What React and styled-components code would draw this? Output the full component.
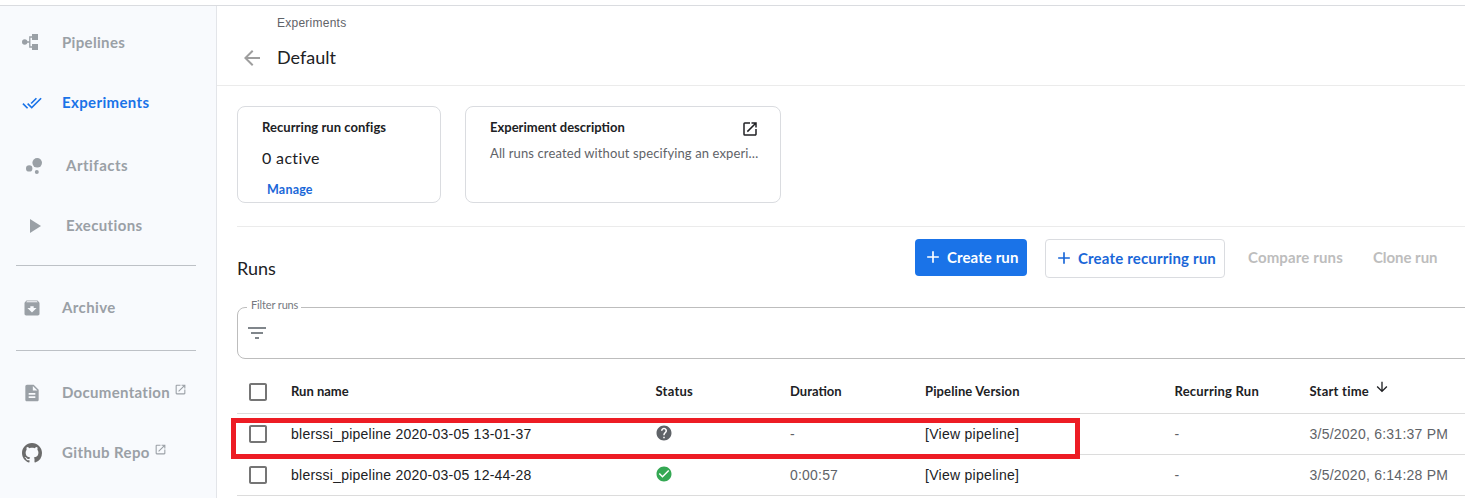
import React from 'react';
import styled, { createGlobalStyle } from 'styled-components';
import {
  MdDoneAll, MdBubbleChart, MdPlayArrow, MdArchive, MdDescription, MdLaunch, MdArrowBack,
  MdFilterList, MdHelp, MdCheckCircle, MdAdd, MdCheckBoxOutlineBlank, MdArrowDownward,
} from 'react-icons/md';

const Global = createGlobalStyle`
  * { box-sizing: border-box; }
  body {
    margin: 0;
    overflow: hidden;
    background: #fff;
    color: #202124;
    font-family: Lato, sans-serif;
  }
`;

const Page = styled.div`
  display: flex;
  flex-direction: column;
  width: 1465px;
  height: 498px;
  padding-top: 5px;
  overflow: hidden;
`;

const Body = styled.div`
  display: flex;
  flex: 1;
  border-top: 1px solid #dadce0;
`;

const Sidebar = styled.nav`
  display: flex;
  flex-direction: column;
  width: 217px;
  flex: none;
  padding-top: 7px;
  background: #f8fafd;
  border-right: 1px solid #e3e5e9;
`;

const NavItem = styled.a`
  display: flex;
  align-items: center;
  height: 60px;
  flex: none;
  margin-top: ${p => p.$gap || 0}px;
  padding-left: 22px;
  color: ${p => (p.$active ? '#1a73e8' : '#9aa0a6')};
  svg { flex: none; }
`;

const NavLabel = styled.span`
  margin: 0 0 2px 20px;
  font-size: 15px;
  font-weight: 700;
  line-height: 20px;
  letter-spacing: ${p => p.$track}px;
`;

const External = styled.span`
  display: flex;
  margin: -7px 0 0 4px;
`;

const NavRule = styled.div`
  height: 1px;
  flex: none;
  margin: ${p => p.$top}px 20px ${p => p.$bottom}px 16px;
  background: #bdc1c6;
`;

const Main = styled.main`
  display: flex;
  flex-direction: column;
  flex: 1;
  min-width: 0;
`;

const Header = styled.header`
  height: 80px;
  flex: none;
  padding: 9px 0 0 23px;
  border-bottom: 1px solid #ebebeb;
`;

const Crumb = styled.div`
  padding-left: 37px;
  color: #5f6368;
  font: 12px/16px "Liberation Sans", sans-serif;
  letter-spacing: 0.25px;
`;

const TitleRow = styled.div`
  display: flex;
  align-items: center;
  height: 24px;
  margin-top: 15px;
  color: #9e9e9e;
`;

const Title = styled.h1`
  margin: 0 0 2px 13px;
  color: #202124;
  font-size: 18px;
  font-weight: 400;
  line-height: 24px;
`;

const Content = styled.div`
  display: flex;
  flex-direction: column;
  padding: 20px 0 0 20px;
`;

const Cards = styled.div`
  display: flex;
  gap: 24px;
  height: 121px;
  border-bottom: 1px solid #ebebeb;
`;

const Card = styled.section`
  width: ${p => p.$width}px;
  height: 97px;
  padding: 12px 21px 0 24px;
  border: 1px solid #dadce0;
  border-radius: 8px;
`;

const CardHead = styled.div`
  display: flex;
  justify-content: space-between;
  height: 18px;
`;

const CardTitle = styled.h2`
  margin: 0;
  font-size: 13px;
  font-weight: 700;
  line-height: 16px;
  letter-spacing: ${p => p.$track}px;
`;

const LaunchButton = styled.span`
  display: flex;
  margin-top: 1px;
`;

const ActiveCount = styled.div`
  margin-top: 13px;
  font-size: 16px;
  line-height: 20px;
  letter-spacing: 0.35px;
`;

const ManageLink = styled.a`
  display: block;
  margin: 14px 0 0 5px;
  color: #1a67d8;
  font-size: 12.5px;
  font-weight: 700;
  line-height: 16px;
  letter-spacing: 0.2px;
`;

const Description = styled.p`
  width: 272px;
  margin: 7px 0 0;
  color: #5f6368;
  font-size: 13px;
  line-height: 18px;
  letter-spacing: 0.12px;
  white-space: nowrap;
`;

const Toolbar = styled.div`
  display: flex;
  align-items: flex-start;
  height: 80px;
  padding-top: 12px;
`;

const RunsTitle = styled.h2`
  width: 678px;
  margin: 17px 0 0;
  font-size: 18px;
  font-weight: 400;
  line-height: 24px;
`;

const Button = styled.button`
  display: flex;
  align-items: center;
  gap: 4px;
  width: ${p => p.$width}px;
  height: ${p => (p.$primary ? 37 : 39)}px;
  margin: 0 ${p => (p.$primary ? 18 : 23)}px 0 0;
  padding: 0 0 1px 8px;
  border: ${p => (p.$primary ? '0' : '1px solid #dadce0')};
  border-radius: 4px;
  background: ${p => (p.$primary ? '#1a73e8' : '#fff')};
  color: ${p => (p.$primary ? '#fff' : '#1a67d8')};
  font: 700 15px/20px Lato, sans-serif;
  letter-spacing: ${p => (p.$primary ? 0.1 : 0.17)}px;
  white-space: nowrap;
  svg { flex: none; }
`;

const DisabledAction = styled.span`
  width: ${p => p.$width}px;
  padding-top: 8px;
  color: #bdbdbd;
  font-size: 15px;
  font-weight: 700;
  line-height: 20px;
  letter-spacing: ${p => p.$track}px;
  white-space: nowrap;
`;

const Filter = styled.fieldset`
  display: flex;
  align-items: flex-start;
  height: 61px;
  min-width: 0;
  margin: -9px -12px 0 0;
  padding: 5px 0 0 7px;
  border: 1px solid #bdbdbd;
  border-radius: 8px;
  color: #80868b;
`;

const FilterLabel = styled.legend`
  height: 18px;
  margin-left: 2px;
  padding: 0 3px 0 4px;
  color: #757980;
  font-size: 11px;
  line-height: 14px;
  letter-spacing: -0.14px;
`;

const Table = styled.div`
  position: relative;
  display: flex;
  flex-direction: column;
  margin-top: 12px;
`;

const Row = styled.div`
  display: grid;
  grid-template-columns: 54px 364.5px 134.5px 135px 249.5px 135px 1fr;
  align-items: center;
  height: ${p => (p.$head ? 43 : 41)}px;
  border-bottom: 1px solid #dcdcdc;
`;

const CheckCell = styled.span`
  display: flex;
  padding-left: 9px;
  color: #757575;
`;

const HeadCell = styled.span`
  display: flex;
  align-items: center;
  margin-top: -2px;
  font-size: 13px;
  font-weight: 700;
  line-height: 16px;
  letter-spacing: ${p => p.$track}px;
  svg { margin: -8px 0 0 5px; }
`;

const Cell = styled.span`
  display: flex;
  color: ${p => (p.$strong ? '#202124' : '#5f6368')};
  font: 14px/18px "Liberation Sans", sans-serif;
  letter-spacing: ${p => p.$track ?? 0.24}px;
`;

const StatusIcon = styled.span`
  display: flex;
  margin: -3px 0 0 -1px;
  color: ${p => p.$color};
`;

const Highlight = styled.div`
  position: absolute;
  left: -6px;
  top: 47px;
  width: 849px;
  height: 41px;
  border: 5px solid #ed1c24;
`;

const PipelineIcon = () => (
  <svg width="20" height="20" viewBox="0 0 20 20" fill="currentColor">
    <circle cx="2.7" cy="9" r="2.7" />
    <rect x="10" y="1" width="6" height="6" />
    <rect x="10" y="11" width="6" height="6" />
    <path d="M4 9h4M10.5 4H7.8v10h2.7" fill="none" stroke="currentColor" strokeWidth="1.3" />
  </svg>
);

const GithubIcon = () => (
  <svg width="20" height="20" viewBox="0 0 16 16" fill="#6b6b6b">
    <path d="M8 0C3.58 0 0 3.58 0 8c0 3.54 2.29 6.53 5.47 7.59.4.07.55-.17.55-.38 0-.19-.01-.82-.01-1.49-2.01.37-2.53-.49-2.69-.94-.09-.23-.48-.94-.82-1.13-.28-.15-.68-.52-.01-.53.63-.01 1.08.58 1.23.82.72 1.21 1.87.87 2.33.66.07-.52.28-.87.51-1.07-1.78-.2-3.64-.89-3.64-3.95 0-.87.31-1.59.82-2.15-.08-.2-.36-1.02.08-2.12 0 0 .67-.21 2.2.82.64-.18 1.32-.27 2-.27s1.36.09 2 .27c1.53-1.04 2.2-.82 2.2-.82.44 1.1.16 1.92.08 2.12.51.56.82 1.27.82 2.15 0 3.07-1.87 3.75-3.65 3.95.29.25.54.73.54 1.48 0 1.07-.01 1.93-.01 2.2 0 .21.15.46.55.38A8.01 8.01 0 0 0 16 8c0-4.42-3.58-8-8-8z" />
  </svg>
);

const columns = [
  ['Run name', 0], ['Status', 0.24], ['Duration', 0],
  ['Pipeline Version', 0.12], ['Recurring Run', 0.22], ['Start time', 0.24],
];

const runs = [
  { name: 'blerssi_pipeline 2020-03-05 13-01-37', ok: false, duration: '-', start: '3/5/2020, 6:31:37 PM' },
  { name: 'blerssi_pipeline 2020-03-05 12-44-28', ok: true, duration: '0:00:57', start: '3/5/2020, 6:14:28 PM' },
];

export default function App() {
  return (
    <Page>
      <Global />
      <Body>
        <Sidebar>
          <NavItem><PipelineIcon /><NavLabel $track={0.33}>Pipelines</NavLabel></NavItem>
          <NavItem $active><MdDoneAll size={20} /><NavLabel $track={0.36}>Experiments</NavLabel></NavItem>
          <NavItem $gap={3}><MdBubbleChart size={24} /><NavLabel $track={0.48}>Artifacts</NavLabel></NavItem>
          <NavItem><MdPlayArrow size={24} /><NavLabel $track={0.36}>Executions</NavLabel></NavItem>
          <NavRule $top={9} $bottom={12} />
          <NavItem><MdArchive size={20} /><NavLabel $track={0.4}>Archive</NavLabel></NavItem>
          <NavRule $top={12} $bottom={12} />
          <NavItem>
            <MdDescription size={20} /><NavLabel $track={0.3}>Documentation</NavLabel>
            <External><MdLaunch size={13} /></External>
          </NavItem>
          <NavItem>
            <GithubIcon /><NavLabel $track={0.38}>Github Repo</NavLabel>
            <External><MdLaunch size={13} /></External>
          </NavItem>
        </Sidebar>
        <Main>
          <Header>
            <Crumb>Experiments</Crumb>
            <TitleRow><MdArrowBack size={24} /><Title>Default</Title></TitleRow>
          </Header>
          <Content>
            <Cards>
              <Card $width={204}>
                <CardTitle $track={0.06}>Recurring run configs</CardTitle>
                <ActiveCount>0 active</ActiveCount>
                <ManageLink>Manage</ManageLink>
              </Card>
              <Card $width={316}>
                <CardHead>
                  <CardTitle $track={0}>Experiment description</CardTitle>
                  <LaunchButton><MdLaunch size={18} /></LaunchButton>
                </CardHead>
                <Description>All runs created without specifying an experi…</Description>
              </Card>
            </Cards>
            <Toolbar>
              <RunsTitle>Runs</RunsTitle>
              <Button $primary $width={112}><MdAdd size={20} />Create run</Button>
              <Button $width={180}><MdAdd size={20} />Create recurring run</Button>
              <DisabledAction $width={125} $track={0.14}>Compare runs</DisabledAction>
              <DisabledAction $width={80} $track={-0.05}>Clone run</DisabledAction>
            </Toolbar>
            <Filter>
              <FilterLabel>Filter runs</FilterLabel>
              <MdFilterList size={24} />
            </Filter>
            <Table>
              <Row $head>
                <CheckCell><MdCheckBoxOutlineBlank size={24} /></CheckCell>
                {columns.map(([label, track]) => (
                  <HeadCell key={label} $track={track}>
                    {label}
                    {label === 'Start time' && <MdArrowDownward size={16} />}
                  </HeadCell>
                ))}
              </Row>
              {runs.map(run => (
                <Row key={run.name}>
                  <CheckCell><MdCheckBoxOutlineBlank size={24} /></CheckCell>
                  <Cell $strong>{run.name}</Cell>
                  <StatusIcon $color={run.ok ? '#34a853' : '#5f6368'}>
                    {run.ok ? <MdCheckCircle size={18} /> : <MdHelp size={18} />}
                  </StatusIcon>
                  <Cell $track={0.2}>{run.duration}</Cell>
                  <Cell $strong $track={0.28}>[View pipeline]</Cell>
                  <Cell>-</Cell>
                  <Cell>{run.start}</Cell>
                </Row>
              ))}
              <Highlight />
            </Table>
          </Content>
        </Main>
      </Body>
    </Page>
  );
}
